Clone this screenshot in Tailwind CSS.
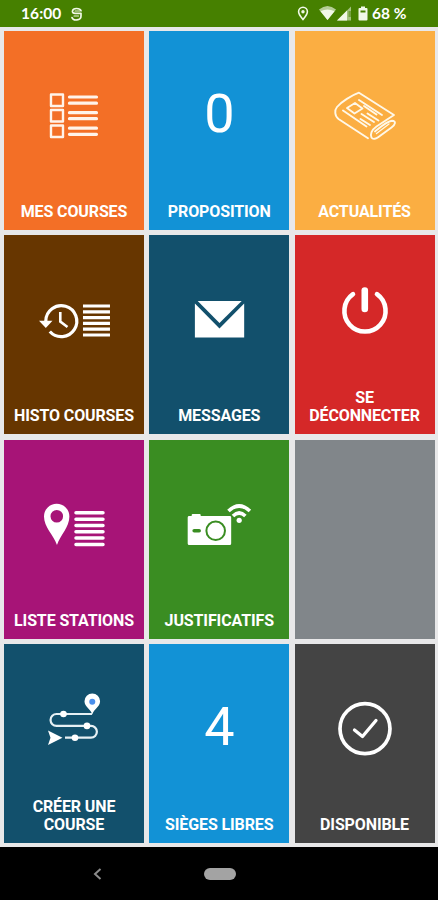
<!DOCTYPE html>
<html lang="fr">
<head>
  <meta charset="UTF-8">
  <title>Menu chauffeur</title>
  <script src="https://cdn.jsdelivr.net/npm/@tailwindcss/browser@4"></script>
</head>
<body class="h-[900px] w-[438px] overflow-hidden bg-black font-['Roboto',sans-serif] text-white flex flex-col">

  <!-- Barre de statut -->
  <header class="h-[27px] shrink-0 bg-[#468000] flex items-center pl-[21px] font-['Lato',sans-serif] text-[15.5px] font-bold">
    <span class="w-[49px] pt-px tracking-[0.1px]">16:00</span>
    <svg class="w-[13px] h-[14px]" viewBox="0 0 13 14" fill="none" stroke="#f1f8e8" stroke-width="1.7" stroke-linecap="round" stroke-linejoin="round">
      <path d="M11 3.8C10 .8 3 .6 2.5 4C2.300 5.600 3.200 6.300 5 6.300H11V9C11 14 3 14 2 10.500"/>
      <path d="M5 4H9.500M4 9H8.500" stroke-width="1.200"/>
    </svg>
    <svg class="ml-[214px] w-[12px] h-[15px]" viewBox="0 0 12 15" fill="none" stroke="#f1f8e8" stroke-width="1.600">
      <path d="M6 13.500C3.500 10.500 1.600 8.300 1.600 5.700a4.400 4.400 0 0 1 8.800 0C10.400 8.300 8.500 10.500 6 13.500Z"/>
      <circle cx="6" cy="5.700" r="1.700" fill="#f1f8e8" stroke="none"/>
    </svg>
    <svg class="ml-[10px] w-[33px] h-[15px]" viewBox="0 0 33 15" fill="#f1f8e8">
      <path d="M0 3.500Q8.500-3.500 17 3.500L8.500 14Z" fill-opacity=".65"/>
      <path d="M1.500 5.300Q8.500 1.500 15.500 5.300L8.500 14Z"/>
      <path d="M18 14.500L32 .5V14.500Z" fill-opacity=".55"/>
      <path d="M18 14.500L28 4.500V14.500Z"/>
      <path d="M29.500 5H32V11H29.500Z" fill="#468000" fill-opacity=".5"/>
    </svg>
    <svg class="ml-[6px] w-[10px] h-[15px]" viewBox="0 0 10 15">
      <path d="M3 .5H7V2H8.500Q9.500 2 9.500 3V13.500Q9.500 14.500 8.500 14.500H1.500Q.5 14.500.5 13.500V3Q.5 2 1.500 2H3Z" fill="#f1f8e8"/>
      <path d="M2.500 4.500H7.500V6.500H2.500Z" fill="#468000"/>
    </svg>
    <span class="ml-[4px] pt-px whitespace-nowrap">68 %</span>
  </header>

  <!-- Grille des actions -->
  <main class="h-[820px] shrink-0 bg-[#e8e8e9] grid grid-cols-3 grid-rows-4 gap-x-[5.300px] gap-y-[5.500px] pt-[3.500px] pb-[4px] pl-[4px] pr-[3.500px] text-center text-[16px] leading-[18.500px] tracking-[-0.12px] font-bold">

    <a class="bg-[#f36f26] flex flex-col justify-between pb-[8.500px]">
      <svg class="w-full h-[120px]" viewBox="4 30.500 140 120" fill="none" stroke="#fff3ea" stroke-width="2.400">
        <path d="M51 94H63V105.500H51ZM51 109.500H63V121H51ZM51 125H63V136.500H51Z" stroke-linejoin="round"/>
        <path d="M69.500 96.500H96.500M69.500 102.700H96.500M69.500 112.200H96.500M69.500 118.200H96.500M69.500 127.700H96.500M69.500 133.800H96.500" stroke-width="3.200" stroke-linecap="round"/>
      </svg>
      <span>MES COURSES</span>
    </a>

    <a class="bg-[#1292d6] flex flex-col justify-between pb-[8.500px]">
      <span class="pt-[51px] text-[54px] leading-[64px] font-normal">0</span>
      <span>PROPOSITION</span>
    </a>

    <a class="bg-[#fbae42] flex flex-col justify-between pb-[8.500px]">
      <svg class="w-full h-[120px]" viewBox="294.500 30.500 140 120" fill="none" stroke="#fff8e8" stroke-width="1.900" stroke-linecap="round" stroke-linejoin="round">
        <path d="M367.500 137.800L338 118.500C334 115.500 334 109.500 336.500 106.500C341 101 351 95 358.500 92.200L393.500 114.500L376 126C371 129.500 369.500 134 371 137C372.500 139.500 376 138 378 136.500L391 127C395 124 396 120.500 391.500 120.300C387 120.500 380 126.500 374.500 131"/>
        <path d="M358.500 99.500L381.500 114.500M346.500 107.500L354.500 102.500L362 108L354 113ZM342.500 110L366 126M363.500 105.500L376 114M367 113L378 120M361 113.500L373.500 121.500M360 118.500L369.500 124.500"/>
        <path d="M376 133L388.500 123.500" stroke-width="1.300"/>
      </svg>
      <span>ACTUALITÉS</span>
    </a>

    <a class="bg-[#673600] flex flex-col justify-between pb-[8.500px]">
      <svg class="w-full h-[120px]" viewBox="4 235 140 120" fill="none" stroke="#fff" stroke-width="3.200">
        <path d="M45.800 321A15.500 15.500 0 1 1 49.800 331.500"/>
        <path d="M39 320.700H52.500L45.800 328Z" fill="#fff" stroke="none"/>
        <path d="M60.300 312V321.500L67.500 327" stroke-width="2.600"/>
        <path d="M83 306H110M83 311.800H110M83 317.600H110M83 323.400H110M83 329.200H110M83 335H110"/>
      </svg>
      <span>HISTO COURSES</span>
    </a>

    <a class="bg-[#12506c] flex flex-col justify-between pb-[8.500px]">
      <svg class="w-full h-[120px]" viewBox="149.300 235 140 120" fill="#fff">
        <path d="M198 301H242L219.800 323Z"/>
        <path d="M195.200 303.500L219.800 328.500L244.500 303.500V337.500H195.200Z"/>
      </svg>
      <span>MESSAGES</span>
    </a>

    <a class="bg-[#d52828] flex flex-col justify-between pb-[8.500px]">
      <svg class="w-full h-[120px]" viewBox="294.500 235 140 120" fill="none" stroke="#fff" stroke-linecap="round">
        <path d="M352.500 294.200A20.600 20.600 0 1 0 376.500 294.200" stroke-width="4.600"/>
        <path d="M364.300 290.500V309" stroke-width="6.600"/>
      </svg>
      <span>SE<br>DÉCONNECTER</span>
    </a>

    <a class="bg-[#a71477] flex flex-col justify-between pb-[8.500px]">
      <svg class="w-full h-[120px]" viewBox="4 439.500 140 120" fill="#fff">
        <path fill-rule="evenodd" d="M57 544.500C53.500 534.500 44 526.500 44 516A12.700 12.700 0 0 1 69.400 516C69.400 526.500 60.500 534.500 57 544.500ZM56.800 509.500A6.300 6.300 0 1 0 56.800 522.100A6.300 6.300 0 1 0 56.800 509.500Z"/>
        <path d="M76 512.300H103M76 518.700H103M76 525H103M76 531.300H103M76 537.600H103M76 544H103" fill="none" stroke="#fff" stroke-width="3.500" stroke-linecap="round"/>
      </svg>
      <span>LISTE STATIONS</span>
    </a>

    <a class="bg-[#3a8d22] flex flex-col justify-between pb-[8.500px]">
      <svg class="w-full h-[120px]" viewBox="149.300 439.500 140 120">
        <path d="M189.500 515.500H192V514.500Q192 513.500 193 513.500H200Q201 513.500 201 514.500V515.500H230Q231.500 515.500 231.500 517V543Q231.500 544.500 230 544.500H189.500Q188 544.500 188 543V517Q188 515.500 189.500 515.500Z" fill="#fff"/>
        <circle cx="216" cy="530.300" r="9.300" fill="none" stroke="#3a8d22" stroke-width="2"/>
        <path d="M194.500 530.300H199.500" stroke="#3a8d22" stroke-width="3.600" stroke-linecap="round"/>
        <circle cx="239.500" cy="519.800" r="2.600" fill="#fff"/>
        <path d="M228.800 510.500Q239.500 500.500 250.200 510.500M233.300 515.500Q239.500 509.500 245.700 515.500" fill="none" stroke="#fff" stroke-width="3.600"/>
      </svg>
      <span>JUSTIFICATIFS</span>
    </a>

    <div class="bg-[#81868a]"></div>

    <a class="bg-[#12506c] flex flex-col justify-between pb-[8.500px]">
      <svg class="w-full h-[120px]" viewBox="4 644 140 120" fill="#fff">
        <path d="M92 714H56.500A5.900 5.900 0 0 0 56.500 725.900H91A5.900 5.900 0 0 1 91 737.700H65" fill="none" stroke="#e6f0f4" stroke-width="2.200"/>
        <circle cx="63.500" cy="714" r="3.300"/>
        <circle cx="87" cy="725.900" r="3.300"/>
        <circle cx="75" cy="737.700" r="3.300"/>
        <path d="M48 730.500L62.500 737.800L48 745L50.500 737.800Z"/>
        <path d="M92.300 714.500C91 709.500 84.500 707 84.500 701.300A7.800 7.800 0 0 1 100.100 701.300C100.100 707 93.600 709.500 92.300 714.500Z"/>
        <circle cx="92.300" cy="701.700" r="3" fill="#4a8fec"/>
      </svg>
      <span>CRÉER UNE<br>COURSE</span>
    </a>

    <a class="bg-[#1292d6] flex flex-col justify-between pb-[8.500px]">
      <span class="pt-[51px] text-[54px] leading-[64px] font-normal">4</span>
      <span>SIÈGES LIBRES</span>
    </a>

    <a class="bg-[#444] flex flex-col justify-between pb-[8.500px]">
      <svg class="w-full h-[120px]" viewBox="294.500 644 140 120" fill="none" stroke="#fff" stroke-width="3.700" stroke-linecap="round" stroke-linejoin="round">
        <circle cx="364.500" cy="728.700" r="25"/>
        <path d="M354 730L362 736.500L375.500 720.500" stroke-width="3.300"/>
      </svg>
      <span>DISPONIBLE</span>
    </a>
  </main>

  <!-- Barre de navigation Android -->
  <nav class="flex-1 flex items-center pl-[93px]">
    <svg class="w-[9px] h-[12px]" viewBox="0 0 9 12" fill="none" stroke="#8c8c8c" stroke-width="2">
      <path d="M7.500 1L2 6L7.500 11"/>
    </svg>
    <div class="ml-[101.500px] w-[32px] h-[12px] rounded-full bg-[#a3a3a3]"></div>
  </nav>
</body>
</html>
